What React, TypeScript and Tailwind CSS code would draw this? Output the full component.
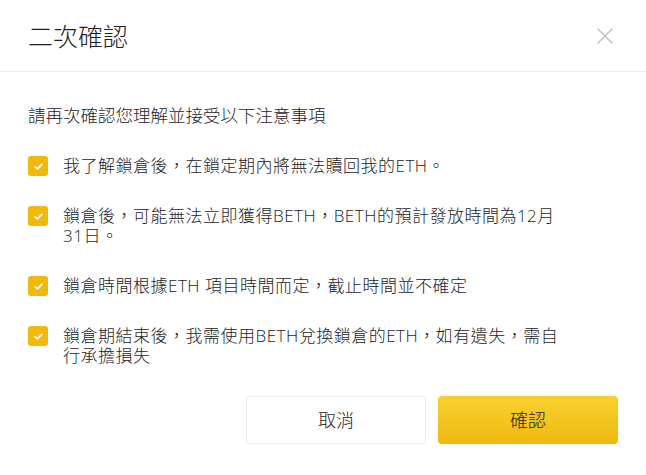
import React, { useState } from 'react';

const ITEMS = [
  '我了解鎖倉後，在鎖定期內將無法贖回我的ETH。',
  '鎖倉後，可能無法立即獲得BETH，BETH的預計發放時間為12月31日。',
  '鎖倉時間根據ETH 項目時間而定，截止時間並不確定',
  '鎖倉期結束後，我需使用BETH兌換鎖倉的ETH，如有遺失，需自行承擔損失',
];

const CheckBox = ({ checked, onClick }: { checked: boolean; onClick: () => void }) => (
  <button
    onClick={onClick}
    className={`w-5 h-5 shrink-0 rounded-[3px] flex items-center justify-center ${checked ? 'bg-[#f0b90b]' : 'border border-[#b7bdc6] bg-white'}`}
  >
    {checked && (
      <svg viewBox="0 0 12 12" className="w-[11px] h-[11px]" fill="none" stroke="white" strokeWidth={1.9} strokeLinecap="round" strokeLinejoin="round">
        <path d="M2.4 6.3l2.4 2.3 4.8-5" />
      </svg>
    )}
  </button>
);

export default function App() {
  const [checked, setChecked] = useState([true, true, true, true]);

  const toggle = (i: number) => setChecked(c => c.map((v, idx) => (idx === i ? !v : v)));

  return (
    <div className="w-[646px] h-[475px] bg-white font-['Open_Sans','Noto_Sans_CJK_TC',sans-serif] font-light overflow-hidden">
      {/* Header */}
      <div className="h-[72px] px-7 flex items-center justify-between border-b border-[#eaecef]">
        <h1 className="text-[25px] leading-[28px] text-[#1e2329]">二次確認</h1>
        <button className="w-4 h-4 mr-[5px] text-[#b7bdc6]">
          <svg viewBox="0 0 16 16" className="w-4 h-4" fill="none" stroke="currentColor" strokeWidth={1.4} strokeLinecap="round">
            <path d="M1 1l14 14M15 1L1 15" />
          </svg>
        </button>
      </div>

      <div className="px-7 pt-[33px]">
        <p className="text-[17.5px] leading-[20px] text-[#1e2329]">請再次確認您理解並接受以下注意事項</p>

        <div className="mt-[31px] flex flex-col gap-[30px] pr-[52px]">
          {ITEMS.map((text, i) => (
            <div key={i} className="flex items-start gap-[15px]">
              <CheckBox checked={checked[i]} onClick={() => toggle(i)} />
              <span className="text-[17px] leading-[20px] tracking-[0.5px] text-[#1e2329]">{text}</span>
            </div>
          ))}
        </div>

        <div className="mt-[30px] flex justify-end gap-3">
          <button className="w-[180px] h-12 rounded-[4px] border border-[#eaecef] bg-white text-[18px] text-[#1e2329]">
            取消
          </button>
          <button className="w-[180px] h-12 rounded-[4px] bg-gradient-to-b from-[#f8d12f] to-[#f0b90b] text-[18px] text-[#1e2329]">
            確認
          </button>
        </div>
      </div>
    </div>
  );
}
